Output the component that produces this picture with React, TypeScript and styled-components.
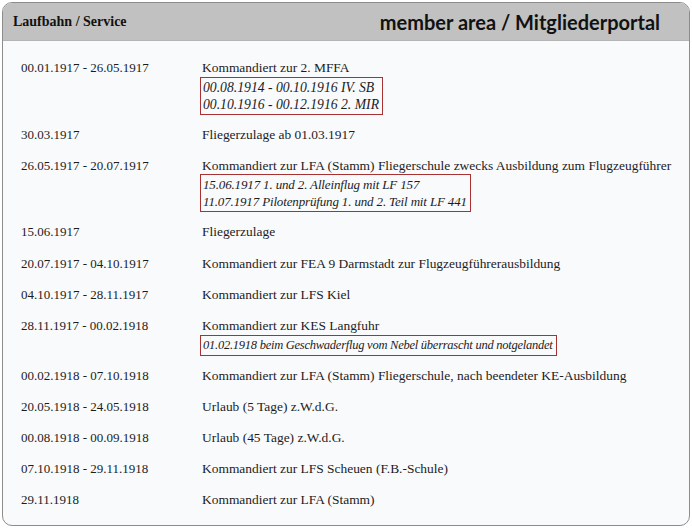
import * as React from 'react'
import styled, {createGlobalStyle} from 'styled-components'

const GlobalStyle = createGlobalStyle`
  body {
    margin: 0;
    background: #ffffff;
  }
`

const Panel = styled.div`
  margin: 2px;
  width: 686px;
  border: 1px solid #8c8c8c;
  border-radius: 10px;
  overflow: hidden;
  background: #f9fafc;
`

const Header = styled.div`
  display: flex;
  align-items: center;
  justify-content: space-between;
  height: 37px;
  padding: 0 29px 0 10px;
  background: #c1c1c1;
  border-bottom: 1px solid #b4b4b4;
`

const SectionTitle = styled.div`
  font-family: "Liberation Serif", serif;
  font-weight: bold;
  font-size: 14px;
  color: #111;
`

const PortalTitle = styled.div`
  font-family: Lato, "Open Sans", sans-serif;
  font-weight: bold;
  font-size: 20px;
  color: #111;
`

const Body = styled.div`
  padding: 11px 0 10px 18px;
`

const Row = styled.div<{hasNote: boolean}>`
  display: grid;
  grid-template-columns: 181px 1fr;
  padding: 8px 0 ${p => (p.hasNote ? '4px' : '7.6px')};
  font-family: "Liberation Serif", serif;
  font-size: 13px;
  line-height: 15.6px;
  color: #1c1c1c;
`

const When = styled.div`
  white-space: nowrap;
`

const What = styled.div`
  display: flex;
  flex-direction: column;
  align-items: flex-start;
  font-size: 13.45px;
`

// die Vermerke sind im Original in unterschiedlichen Kursivschriften gesetzt
const Note = styled.div<{size: number; tight: number}>`
  margin: 1px 0 0 -2px;
  padding: 1px 3px 1px 2px;
  border: 1px solid #a83232;
  font-style: italic;
  font-size: ${p => p.size}px;
  letter-spacing: ${p => p.tight}px;
  line-height: 17px;
  white-space: nowrap;
`

interface Entry {
  date: string
  text: string
  notes?: string[]
  noteSize?: number
  noteTight?: number
}

const entries: Entry[] = [
  {
    date: '00.01.1917 - 26.05.1917',
    text: 'Kommandiert zur 2. MFFA',
    notes: ['00.08.1914 - 00.10.1916 IV. SB', '00.10.1916 - 00.12.1916 2. MIR'],
    noteSize: 13.7,
  },
  {date: '30.03.1917', text: 'Fliegerzulage ab 01.03.1917'},
  {
    date: '26.05.1917 - 20.07.1917',
    text: 'Kommandiert zur LFA (Stamm) Fliegerschule zwecks Ausbildung zum Flugzeugführer',
    notes: ['15.06.1917 1. und 2. Alleinflug mit LF 157', '11.07.1917 Pilotenprüfung 1. und 2. Teil mit LF 441'],
    noteSize: 13,
    noteTight: -0.15,
  },
  {date: '15.06.1917', text: 'Fliegerzulage'},
  {date: '20.07.1917 - 04.10.1917', text: 'Kommandiert zur FEA 9 Darmstadt zur Flugzeugführerausbildung'},
  {date: '04.10.1917 - 28.11.1917', text: 'Kommandiert zur LFS Kiel'},
  {
    date: '28.11.1917 - 00.02.1918',
    text: 'Kommandiert zur KES Langfuhr',
    notes: ['01.02.1918 beim Geschwaderflug vom Nebel überrascht und notgelandet'],
    noteSize: 12.5,
    noteTight: -0.25,
  },
  {date: '00.02.1918 - 07.10.1918', text: 'Kommandiert zur LFA (Stamm) Fliegerschule, nach beendeter KE-Ausbildung'},
  {date: '20.05.1918 - 24.05.1918', text: 'Urlaub (5 Tage) z.W.d.G.'},
  {date: '00.08.1918 - 00.09.1918', text: 'Urlaub (45 Tage) z.W.d.G.'},
  {date: '07.10.1918 - 29.11.1918', text: 'Kommandiert zur LFS Scheuen (F.B.-Schule)'},
  {date: '29.11.1918', text: 'Kommandiert zur LFA (Stamm)'},
]

export default function App() {
  return (
    <>
      <GlobalStyle />
      <Panel>
        <Header>
          <SectionTitle>Laufbahn / Service</SectionTitle>
          <PortalTitle>member area / Mitgliederportal</PortalTitle>
        </Header>
        <Body>
          {entries.map(entry => (
            <Row key={entry.date} hasNote={!!entry.notes}>
              <When>{entry.date}</When>
              <What>
                <div>{entry.text}</div>
                {entry.notes && (
                  <Note size={entry.noteSize ?? 13} tight={entry.noteTight ?? 0}>
                    {entry.notes.map(note => (
                      <div key={note}>{note}</div>
                    ))}
                  </Note>
                )}
              </What>
            </Row>
          ))}
        </Body>
      </Panel>
    </>
  )
}
